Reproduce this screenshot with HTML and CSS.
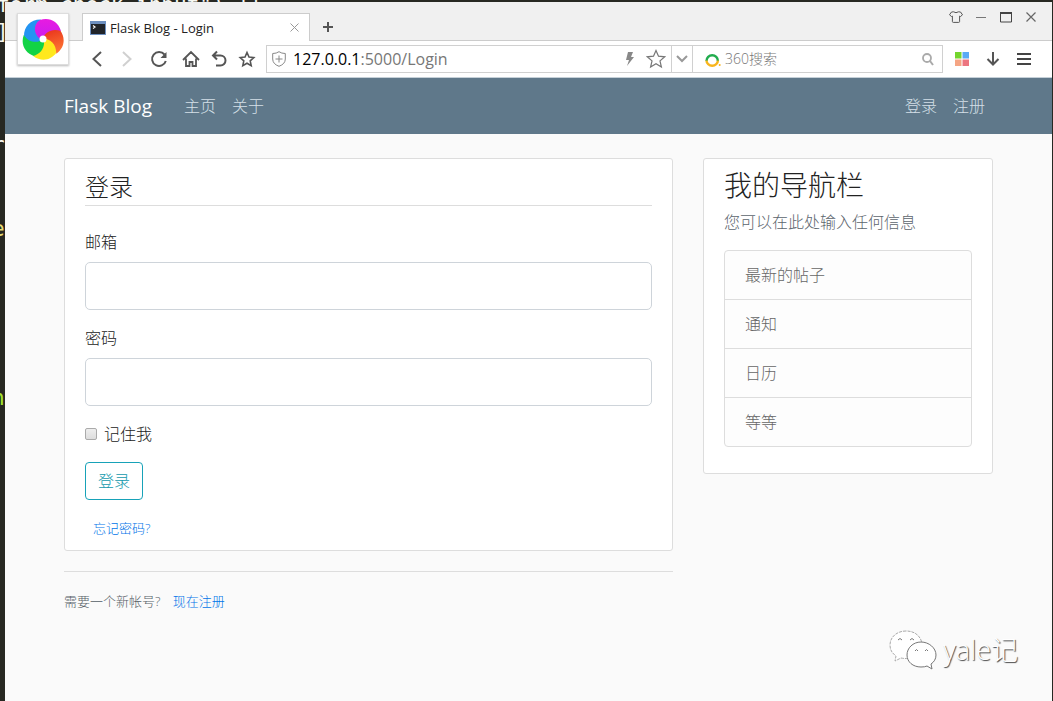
FILE: index.html
```html
<!DOCTYPE html>
<html lang="zh-CN">
<head>
<meta charset="utf-8">
<title>Flask Blog - Login</title>
<link rel="stylesheet" href="styles.css">
</head>
<body>
<div class="desktop">
  <div class="editor" aria-hidden="true">
    <span class="code code-top">form-check-input") }}</span>
    <span class="code code-bracket">]</span>
    <span class="code code-r">r</span>
    <span class="code code-e">e</span>
    <span class="code code-n">n</span>
  </div>

  <div class="window">
    <header class="titlebar">
      <div class="tab">
        <svg class="tab-icon" viewBox="0 0 16 14"><rect width="16" height="14" fill="#6c8fc0"/><rect x="1" y="3" width="14" height="10" fill="#20242a"/><path d="M3 4.500l2 1.500-2 1.500" fill="none" stroke="#fff" stroke-width="1.200"/></svg>
        <span class="tab-title">Flask Blog - Login</span>
        <button class="tab-close" aria-label="关闭标签"><svg width="9" height="9" viewBox="0 0 9 9"><path d="M.5.5l8 8M8.500.5l-8 8" stroke="#999" fill="none"/></svg></button>
      </div>
      <button class="new-tab" aria-label="新标签"><svg width="12" height="12" viewBox="0 0 12 12"><path d="M6 1v10M1 6h10" stroke="#555" stroke-width="2"/></svg></button>
      <div class="window-controls">
        <button aria-label="皮肤"><svg width="14" height="12" viewBox="0 0 14 12"><path d="M4.500.8Q7 2.600 9.500.8L11.500 1l2 2.800-2 1.700-.9-.4v5.400q0 .9-.9.9H4.300q-.9 0-.9-.9V5.100l-.9.4-2-1.700L2.500 1z" fill="none" stroke="#555"/></svg></button>
        <button aria-label="最小化"><svg width="10" height="12" viewBox="0 0 10 12"><path d="M0 6.500h10" stroke="#777"/></svg></button>
        <button aria-label="最大化"><svg width="12" height="12" viewBox="0 0 12 12"><path d="M.5 1.500h11v9.500H.5z" fill="none" stroke="#444"/><path d="M0 2h12" stroke="#444" stroke-width="2"/></svg></button>
        <button aria-label="关闭"><svg width="10" height="12" viewBox="0 0 10 12"><path d="M.5 1.500l9 9M9.500 1.500l-9 9" stroke="#666" stroke-width="1.200"/></svg></button>
      </div>
    </header>

    <div class="toolbar">
      <button class="tool tool-back" aria-label="后退"><svg width="12" height="18" viewBox="0 0 12 18"><path d="M10 2L2.500 9l7.500 7" fill="none" stroke="#555" stroke-width="2"/></svg></button>
      <button class="tool" aria-label="前进"><svg width="12" height="18" viewBox="0 0 12 18"><path d="M2 2l7.500 7L2 16" fill="none" stroke="#d0d0d0" stroke-width="2"/></svg></button>
      <button class="tool" aria-label="刷新"><svg width="18" height="18" viewBox="0 0 18 18"><path d="M14.500 4.500A7 7 0 1 0 15.800 11" fill="none" stroke="#555" stroke-width="2"/><path d="M16.500 2v6h-6z" fill="#555"/></svg></button>
      <button class="tool" aria-label="主页"><svg width="18" height="18" viewBox="0 0 18 18"><path d="M1 10l8-8 8 8M4 8.500V16h3.500v-4h3v4H14V8.500" fill="none" stroke="#555" stroke-width="1.800"/></svg></button>
      <button class="tool tool-narrow" aria-label="撤销"><svg width="16" height="18" viewBox="0 0 16 18"><path d="M6 1.500L2 5.500l4 4M2 5.500h7.500a5 5 0 0 1 0 10H5" fill="none" stroke="#555" stroke-width="2"/></svg></button>
      <button class="tool" aria-label="收藏夹"><svg width="18" height="18" viewBox="0 0 18 18"><path d="M9 2.500l2 4.500 4.800.5-3.600 3.300 1 4.900L9 13.200 4.800 15.700l1-4.900-3.600-3.300L7 7z" fill="none" stroke="#555" stroke-width="1.600"/></svg></button>

      <div class="address">
        <div class="url">
          <svg class="shield" width="14" height="16" viewBox="0 0 14 16"><path d="M7 .7Q9.500 2.500 13.300 2.500V8q0 5-6.300 7.300Q.7 13 .7 8V2.500Q4.500 2.500 7 .7zM3.500 8h7M7 4.500v7" fill="none" stroke="#888"/></svg>
          <span class="url-text"><b>127.0.0.1</b>:5000/Login</span>
          <svg width="9" height="14" viewBox="0 0 9 14"><path d="M3 0h5L6 5h3L2 14l2-6H1z" fill="#888"/></svg>
          <svg class="url-star" width="20" height="20" viewBox="0 0 20 20"><path d="M10 1.500l2.500 5.700 6.200.6-4.700 4.100 1.400 6.100L10 14.800 4.600 18 6 11.900 1.300 7.800l6.200-.6z" fill="none" stroke="#777" stroke-width="1.200"/></svg>
        </div>
        <button class="drop" aria-label="展开"><svg width="12" height="8" viewBox="0 0 12 8"><path d="M1 1l5 5 5-5" fill="none" stroke="#999" stroke-width="2"/></svg></button>
        <div class="search">
          <svg width="16" height="15" viewBox="0 0 16 15"><path d="M1.500 9a5.700 5.700 0 1 1 11.400 0" fill="none" stroke="#22ac4e" stroke-width="2.400"/><path d="M12.900 8.500a5.700 5.200 0 0 1-11.400 0" fill="none" stroke="#f8b51c" stroke-width="2.400"/><circle cx="14.700" cy="13" r="1" fill="#f8b51c"/></svg>
          <input class="search-input" type="text" placeholder="360搜索" aria-label="搜索">
          <svg width="12" height="13" viewBox="0 0 12 13"><circle cx="5" cy="5" r="4" fill="none" stroke="#aaa" stroke-width="1.800"/><path d="M8 8l3 4" stroke="#aaa" stroke-width="2"/></svg>
        </div>
      </div>

      <div class="extras">
        <button aria-label="应用"><svg width="14" height="14" viewBox="0 0 14 14"><path d="M0 0h6.500v6.500H0z" fill="#74d52d"/><path d="M7.500 0H14v6.500H7.500z" fill="#5aaaf5"/><path d="M0 7.500h6.500V14H0z" fill="#f5a584"/><path d="M7.500 7.500H14V14H7.500z" fill="#ec7580"/></svg></button>
        <button aria-label="下载"><svg width="14" height="14" viewBox="0 0 14 14"><path d="M7 0v12M1.500 7L7 12.500 12.500 7" fill="none" stroke="#555" stroke-width="2"/></svg></button>
        <button aria-label="菜单"><svg width="14" height="14" viewBox="0 0 14 14"><path d="M0 2h14M0 7h14M0 12h14" stroke="#444" stroke-width="2"/></svg></button>
      </div>
    </div>

    <div class="browser-logo">
      <svg width="42" height="42" viewBox="-21 -21 42 42">
        <defs>
          <path id="petal" d="M-1 1C-9-3-11-14-3-19C6-22 15-18 18-8C10-11 2-8-1 1z"/>
          <linearGradient id="g-pink" x2="0" y2="1"><stop stop-color="#e81be0"/><stop offset="1" stop-color="#c81cf0"/></linearGradient>
          <linearGradient id="g-red" x2="1" y2="0"><stop stop-color="#e8321c"/><stop offset="1" stop-color="#ff7a35"/></linearGradient>
        </defs>
        <use href="#petal" fill="#2494f2" transform="rotate(-72)"/>
        <use href="#petal" fill="#12d345" transform="rotate(-144)"/>
        <use href="#petal" fill="#ffe81d" transform="rotate(144)"/>
        <use href="#petal" fill="url(#g-red)" transform="rotate(72)"/>
        <use href="#petal" fill="url(#g-pink)"/>
        <circle r="3.500" fill="#fff"/>
      </svg>
    </div>

    <div class="page">
      <nav class="navbar">
        <div class="container nav-inner">
          <a class="brand" href="#">Flask Blog</a>
          <div class="nav-links"><a href="#">主页</a><a href="#">关于</a></div>
          <div class="nav-links nav-right"><a href="#">登录</a><a href="#">注册</a></div>
        </div>
      </nav>

      <div class="container columns">
        <main>
          <form class="card">
            <h1 class="legend">登录</h1>
            <div class="field"><label for="email">邮箱</label><input id="email" class="text-input" type="text"></div>
            <div class="field"><label for="password">密码</label><input id="password" class="text-input" type="password"></div>
            <div class="check"><input id="remember" type="checkbox"><label for="remember">记住我</label></div>
            <button class="submit" type="button">登录</button>
            <div class="forgot"><a href="#">忘记密码?</a></div>
          </form>
          <div class="signup">需要一个新帐号? <a href="#">现在注册</a></div>
        </main>

        <aside class="card">
          <h2 class="side-title">我的导航栏</h2>
          <p class="side-text">您可以在此处输入任何信息</p>
          <ul class="side-list">
            <li>最新的帖子</li>
            <li>通知</li>
            <li>日历</li>
            <li>等等</li>
          </ul>
        </aside>
      </div>
    </div>
  </div>

  <div class="watermark">
    <svg width="48" height="42" viewBox="0 0 48 42">
      <path d="M17 2C8 2 1 8 1 16c0 5 2 8 6 11l-1 5 6-3q5 1 9 0C33 27 33 19 33 14 31 6 25 2 17 2z" fill="#fff" stroke="#aaa" stroke-dasharray="3 1"/>
      <path d="M32 13c-8 0-14 6-14 13s6 12 14 12q4 0 6-1l5 3-1-5c3-2 5-5 5-9 0-7-7-13-15-13z" fill="#fff" stroke="#777"/>
      <path d="M9 11q2-3 4 0M21 11q2-3 4 0M26 22q1.500-3 3 0M36 22q1.500-3 3 0" fill="none" stroke="#777"/>
    </svg>
    <span>yale记</span>
  </div>
</div>
</body>
</html>
```
FILE: styles.css
```css
* { box-sizing: border-box; }

body {
  margin: 0;
  color: #222;
  font: 300 16px/24px "Open Sans", "Noto Sans CJK SC", sans-serif;
}

a { color: #0074e8; text-decoration: none; }

button {
  display: flex;
  align-items: center;
  justify-content: center;
  padding: 0;
  border: 0;
  background: none;
  font: inherit;
}

svg { display: block; flex: none; }

.desktop {
  position: relative;
  display: flex;
  min-height: 100vh;
  padding: 2px 1px 0 5px;
  overflow: hidden;
  background: #272822;
}

/* Editor behind the browser window */
.editor { position: absolute; inset: 0; }
.code {
  position: absolute;
  left: -8px;
  color: #f8f8f2;
  font: 21px/20px "DejaVu Sans Mono", monospace;
  white-space: pre;
}
.code-top { top: -5px; left: -3px; }
.code-bracket { top: 22px; left: -4px; }
.code-r { top: 135px; }
.code-e { top: 219px; color: #e6db74; }
.code-n { top: 388px; color: #a6e22e; }

/* Browser window */
.window {
  position: relative;
  display: flex;
  flex: 1;
  flex-direction: column;
  min-width: 0;
  background: #fafafa;
}

.titlebar {
  display: flex;
  align-items: flex-end;
  height: 39px;
  padding-left: 77px;
  border-bottom: 1px solid #ccc;
  background: #f0f0f0;
}

.tab {
  display: flex;
  align-items: center;
  gap: 4px;
  width: 228px;
  height: 28px;
  margin-bottom: -1px;
  padding: 0 8px 0 7px;
  border: 1px solid #ccc;
  border-bottom: 0;
  background: #fff;
}
.tab-icon { width: 16px; height: 14px; }
.tab-title { flex: 1; font-size: 13px; font-weight: 400; }
.tab-close { width: 14px; height: 20px; }
.new-tab { width: 36px; height: 27px; }

.window-controls {
  display: flex;
  align-self: flex-start;
  margin-left: auto;
  padding: 5px 9px 0 0;
}
.window-controls button { width: 25px; height: 20px; }

.toolbar {
  display: flex;
  align-items: center;
  height: 37px;
  padding-left: 78px;
  border-bottom: 1px solid #c5d0d8;
  background: #fff;
}
.tool { width: 32px; height: 28px; }
.tool-back { width: 28px; }
.tool-narrow { width: 24px; }

.address {
  display: flex;
  flex: 1;
  min-width: 0;
  height: 28px;
  margin-left: 3px;
  border: 1px solid #d0d0d0;
}
.url {
  display: flex;
  flex: 1;
  align-items: center;
  padding: 0 5px;
}
.url-text { flex: 1; padding-left: 7px; color: #777; font-weight: 400; }
.url-text b { color: #000; font-weight: 400; }
.url-star { margin-left: 12px; }
.drop { width: 22px; border: solid #d0d0d0; border-width: 0 1px; }
.search {
  display: flex;
  align-items: center;
  gap: 4px;
  width: 249px;
  padding: 0 8px 0 12px;
}
.search-input {
  flex: 1;
  min-width: 0;
  padding: 0;
  border: 0;
  outline: 0;
  background: none;
  font: 300 14px/20px "Open Sans", "Noto Sans CJK SC", sans-serif;
}
.search-input::placeholder { color: #777; }

.extras { display: flex; padding: 0 13px 0 3px; }
.extras button { width: 31px; height: 28px; }

.browser-logo {
  position: absolute;
  top: 11px;
  left: 12px;
  display: grid;
  place-items: center;
  width: 52px;
  height: 52px;
  border: 1px solid #ddd;
  background: #fff;
  box-shadow: 0 1px 2px #bbb;
}

/* Page */
.container {
  width: 100%;
  max-width: 959px;
  margin: 0 auto;
  padding: 0 15px;
}

.navbar { background: #5f788a; }
.nav-inner { display: flex; align-items: center; height: 56px; }
.brand { margin-right: 24px; color: #fff; font-size: 19px; font-weight: 400; }
.nav-links { display: flex; }
.nav-links a { padding: 8px; color: #d5e0e8; }
.nav-right { margin-left: auto; }

.columns {
  display: grid;
  grid-template-columns: minmax(0, 609fr) minmax(0, 290fr);
  gap: 30px;
  align-items: start;
  padding-top: 24px;
}

.card {
  padding: 10px 20px;
  border: 1px solid #ddd;
  border-radius: 3px;
  background: #fff;
}

.legend {
  margin: 0 0 24px;
  border-bottom: 1px solid #ddd;
  font-size: 24px;
  font-weight: 300;
  line-height: 36px;
}

.field { display: grid; gap: 8px; margin-bottom: 16px; }
.text-input {
  width: 100%;
  height: 48px;
  padding: 8px 16px;
  border: 1px solid #ced4da;
  border-radius: 5px;
  background: #fff;
  font: inherit;
}

.check { display: flex; align-items: center; gap: 7px; margin-bottom: 16px; }
.check input {
  width: 12px;
  height: 12px;
  margin: 0;
  appearance: none;
  border: 1px solid #aaa;
  border-radius: 2px;
  background: linear-gradient(#eee, #ddd);
}

.submit {
  height: 38px;
  padding: 0 12px;
  border: 1px solid #17a2b8;
  border-radius: 4px;
  color: #1298ac;
}

.forgot { margin-top: 16px; padding-left: 8px; font-size: 13px; }

.signup {
  margin-top: 20px;
  padding-top: 20px;
  border-top: 1px solid #ddd;
  color: #555e66;
  font-size: 13px;
  line-height: 18px;
}
.signup a { margin-left: 9px; }

.side-title { margin: 0 0 8px; font-size: 28px; font-weight: 300; line-height: 33px; }
.side-text { margin: 0 0 16px; color: #5c656d; }
.side-list {
  margin: 0 0 16px;
  padding: 0;
  border: 1px solid #ddd;
  border-radius: 4px;
  background: #fdfdfd;
  color: #666;
  list-style: none;
}
.side-list li { padding: 12px 20px; }
.side-list li + li { border-top: 1px solid #ddd; }

.watermark {
  position: absolute;
  right: 35px;
  bottom: 30px;
  display: flex;
  align-items: center;
  gap: 6px;
  color: #fff;
  font-size: 27px;
  line-height: 42px;
  text-shadow: 1px 1px 1px #444;
}
```
